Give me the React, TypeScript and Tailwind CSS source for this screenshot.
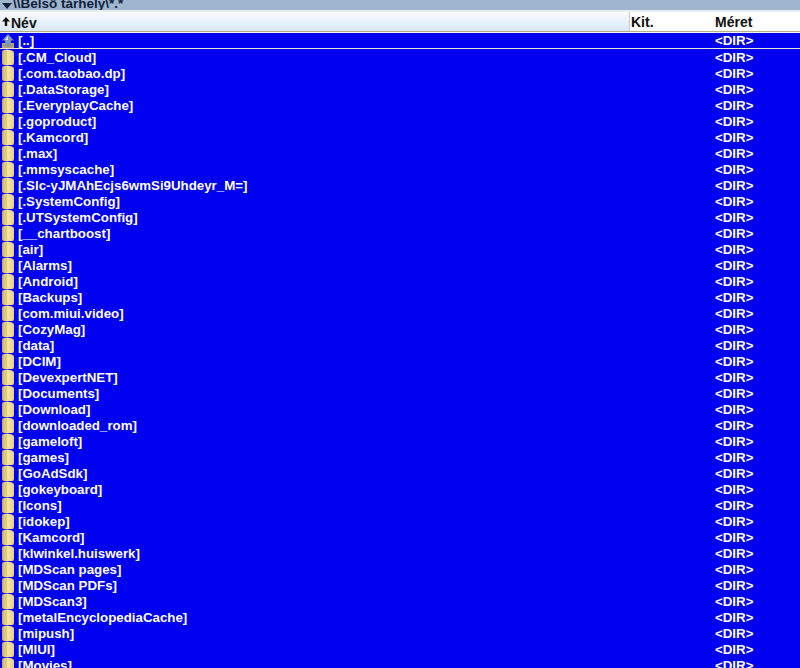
const names = [
  '[..]', '[.CM_Cloud]', '[.com.taobao.dp]', '[.DataStorage]', '[.EveryplayCache]', '[.goproduct]', '[.Kamcord]', '[.max]',
  '[.mmsyscache]', '[.Slc-yJMAhEcjs6wmSi9Uhdeyr_M=]', '[.SystemConfig]', '[.UTSystemConfig]', '[__chartboost]', '[air]',
  '[Alarms]', '[Android]', '[Backups]', '[com.miui.video]', '[CozyMag]', '[data]', '[DCIM]', '[DevexpertNET]', '[Documents]',
  '[Download]', '[downloaded_rom]', '[gameloft]', '[games]', '[GoAdSdk]', '[gokeyboard]', '[Icons]', '[idokep]', '[Kamcord]',
  '[klwinkel.huiswerk]', '[MDScan pages]', '[MDScan PDFs]', '[MDScan3]', '[metalEncyclopediaCache]', '[mipush]', '[MIUI]', '[Movies]',
];

function FolderIcon({ id }: { id: string }) {
  return (
    <svg width="16" height="16" viewBox="0 0 16 16" className="shrink-0">
      <defs>
        <linearGradient id={id} x1="0" x2="1" y1="0" y2="0">
          <stop offset="0" stopColor="#c8a850" />
          <stop offset="0.45" stopColor="#f5e6a8" />
          <stop offset="1" stopColor="#e8cf80" />
        </linearGradient>
      </defs>
      <path d="M2 3 Q2 1 4 1 L7 0.5 L12 1.5 Q14 2 14 4 L14 14 Q14 16 12 16 L4 16 Q2 16 2 14 Z" fill={`url(#${id})`} />
      <path d="M6.5 2 L6.5 15.5" stroke="#c9ad5c" strokeWidth="1" opacity="0.6" />
    </svg>
  );
}

function UpIcon() {
  return (
    <svg width="16" height="16" viewBox="0 0 16 16" className="shrink-0">
      <path d="M2 15 L2 10 L14 10 L14 15 Z" fill="#b8a468" />
      <path d="M8 1 L14 7.5 L11 7.5 L11 14 L5 14 L5 7.5 L2 7.5 Z" fill="#7f97b2" />
      <path d="M8 3 L5 7 L8 7 Z" fill="#dde6ee" />
    </svg>
  );
}

export default function App() {
  return (
    <div className="h-[668px] w-[800px] overflow-hidden bg-[#0000f0] font-['Liberation_Sans',sans-serif] text-[13.3px] leading-4">
      <div className="flex h-[10px] items-end overflow-hidden bg-[#9fb6cf] pl-[2px] text-[13.5px] font-bold text-[#10203a]">
        <svg width="10" height="6" viewBox="0 0 10 6" className="mb-[1px] mr-[1px] shrink-0">
          <path d="M0 0 L10 0 L5 6 Z" fill="#10203a" />
        </svg>
        <span className="mb-[-2px]">\\Belső tárhely\*.*</span>
      </div>
      <div className="h-[2px] bg-[#e8eef2]" />
      <div className="flex h-[19px] items-center bg-white text-[14px] font-bold text-[#101010]">
        <div className="flex h-full w-[630px] items-center border-r border-[#c5ccd4] bg-gradient-to-b from-[#f8fbfe] to-[#d9e8f6] pl-[2px]">
          <svg width="8" height="9" viewBox="0 0 8 9" className="mr-[1px] shrink-0">
            <path d="M4 0 L8 4.5 L5.2 4.5 L5.2 9 L2.8 9 L2.8 4.5 L0 4.5 Z" fill="#101010" />
          </svg>
          <span className="pt-[2px]">Név</span>
        </div>
        <div className="w-[84px] pl-[1px]">Kit.</div>
        <div className="pl-[1px]">Méret</div>
      </div>
      <div className="h-[1px] bg-[#b9ae86]" />
      <div className="h-[1px] bg-[#f4f4ec]" />
      {names.map((name, i) => (
        <div
          key={name}
          className={`flex h-4 items-center font-bold text-white ${i === 0 ? 'border-b border-[#e8e4d0]' : ''}`}
        >
          <div className="flex w-[715px] items-center gap-[2px] overflow-hidden">
            {i === 0 ? <UpIcon /> : <FolderIcon id={`folder-${i}`} />}
            <span className="whitespace-nowrap pt-[1px]">{name}</span>
          </div>
          <div className="pt-[1px]">&lt;DIR&gt;</div>
        </div>
      ))}
    </div>
  );
}
